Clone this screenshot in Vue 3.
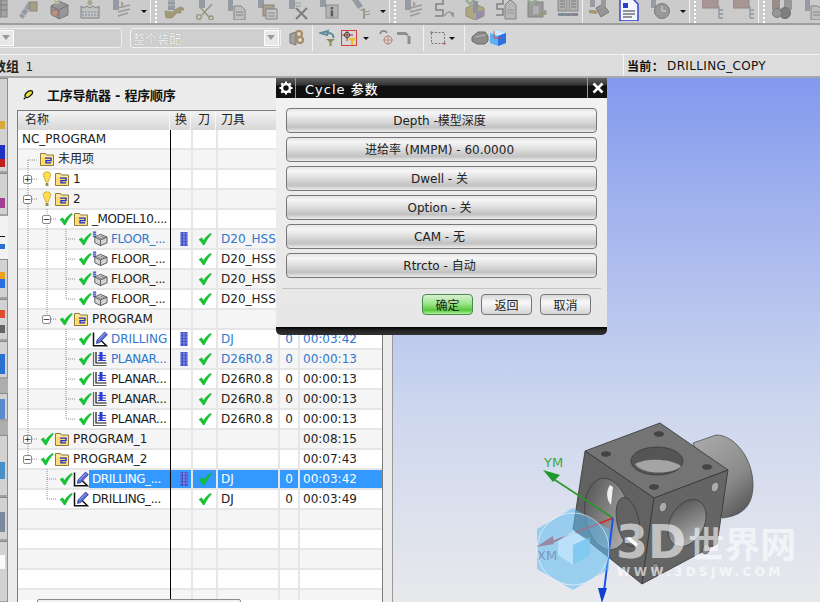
<template>
  <div class="app">
    <svg class="sprites" width="0" height="0">
      <defs>
        <symbol id="check" viewBox="0 0 14 14">
          <path d="M1 7.5 L3.6 5.8 L5.6 8.4 C7.4 5.4 9.6 3 12.8 1.2 L13.4 2.2 C10.6 5 8.4 8.4 6.4 12.8 L5 12.8 C3.8 10.6 2.6 9 1 7.5 Z" fill="#12c832" stroke="#0a9a25" stroke-width=".4" />
        </symbol>
        <symbol id="bulb" viewBox="0 0 14 16">
          <path d="M7 .8 C10 .8 11 2.6 10.6 4.6 C10.2 6.6 8.6 8.6 8.2 11 L5.8 11 C5.4 8.6 3.8 6.6 3.4 4.6 C3 2.6 4 .8 7 .8 Z" fill="#ffe04a" stroke="#b89a20" stroke-width=".7" />
          <rect x="5.6" y="12" width="2.8" height="3" fill="#9a8a50" />
        </symbol>
        <symbol id="folder" viewBox="0 0 16 16">
          <path d="M1.5 4 L1.5 2.5 L6.5 2.5 L7.5 4 L14.5 4 L14.5 14.5 L1.5 14.5 Z" fill="#ffe79a" stroke="#8d7a3c" />
          <path d="M2.5 6 L13.5 6 L13.5 13.5 L2.5 13.5 Z" fill="#ffda6a" />
          <path d="M6 7.2 H12 V9.6 H7 V11.8 H12" fill="none" stroke="#1a2fd8" stroke-width="1.3" />
        </symbol>
        <symbol id="floor" viewBox="0 0 17 16">
          <path d="M3 6 L9 3 L16 6 L16 12 L9 15 L3 12 Z" fill="#d4d4d4" stroke="#555" />
          <path d="M3 6 L9 9 L16 6 M9 9 V15" fill="none" stroke="#555" />
          <path d="M6 6 L11 8 M9 5 L14 7" stroke="#777" />
          <rect x="1" y="0" width="3.4" height="6" fill="#4a5cc8" />
          <path d="M1 2 H4.4 M1 4 H4.4" stroke="#b8c0f0" stroke-width=".8" />
        </symbol>
        <symbol id="drill" viewBox="0 0 16 16">
          <path d="M1.5 1.5 V14.8 H14.5 L8.5 9" fill="none" stroke="#111" stroke-width="1.5" />
          <path d="M4.4 12.4 L5 9 L12.6 1 L15.4 3.6 L7.8 11.6 Z" fill="#5a68d8" stroke="#27308c" stroke-width=".7" />
          <path d="M6.4 9 L13 2.4" stroke="#b8c0f4" stroke-width=".8" />
        </symbol>
        <symbol id="planar" viewBox="0 0 16 16">
          <path d="M1.5 1 V14.5 H14.5" fill="none" stroke="#666" stroke-width="1.2" />
          <path d="M4 1 V12 H14.5" fill="none" stroke="#111" stroke-width="1.2" />
          <path d="M6 4.5 H14 M6 7 H14 M6 9.5 H14" stroke="#2a3cd8" stroke-width="1.2" />
          <rect x="7.5" y="1" width="3" height="9" fill="#2a3cd8" />
        </symbol>
        <symbol id="lock" viewBox="0 0 8 14">
          <rect x=".5" y="0" width="7" height="14" fill="#4450c8" />
          <path d="M.5 2 H7.5 M.5 5 H7.5 M.5 8 H7.5 M.5 11 H7.5 M4 0 V14" stroke="#aab2ea" stroke-width=".8" stroke-dasharray="1.5 1" />
        </symbol>
        <symbol id="grid-doc" viewBox="0 0 22 22">
          <rect x="3" y="2" width="18" height="17" fill="#9a9a9a" stroke="#777" />
          <path d="M3 7 H21 M3 12 H21 M9 2 V19 M15 2 V19" stroke="#6c6c6c" />
        </symbol>
        <symbol id="solid" viewBox="0 0 22 22">
          <path d="M3 8 L11 3 L20 7 L20 17 L11 21 L3 16 Z" fill="#8a8a90" stroke="#666" />
          <path d="M3 8 L11 12 L20 7 M11 12 V21" fill="none" stroke="#5c5c5c" />
          <circle cx="7" cy="15" r="3.4" fill="#a98a7a" stroke="#a0564c" />
          <path d="M7 0 L9 4 L12 2 L11 6 L6 6 Z" fill="#b8b48a" />
        </symbol>
        <symbol id="drillgold" viewBox="0 0 22 22">
          <path d="M2 18 L12 3 L16 6 L6 21 Z" fill="#8a8e98" />
          <path d="M4 15 L9 18 M7 10 L12 13" stroke="#b4b8c0" />
          <rect x="13" y="4" width="7" height="9" fill="#a09672" stroke="#7e7660" />
        </symbol>
        <symbol id="wrench" viewBox="0 0 22 22">
          <rect x="5" y="0" width="7" height="12" fill="#8a8e98" />
          <path d="M5 3 H12 M5 7 H12" stroke="#b4b8c0" />
          <path d="M2 13 L9 14 L15 10 C17 8 21 9 21 12 L18 12 L18 15 L14 15 L9 20 L3 20 Z" fill="#9a8f62" stroke="#7e7660" stroke-width=".6" />
        </symbol>
        <symbol id="scissor" viewBox="0 0 22 22">
          <rect x="5" y="0" width="6" height="10" fill="#8a8e98" />
          <path d="M6 9 L15 19 M18 6 L8 17" stroke="#8e8a70" stroke-width="1.6" />
          <circle cx="5" cy="19" r="2.4" fill="none" stroke="#8e8a70" stroke-width="1.4" />
          <circle cx="17" cy="20" r="2" fill="none" stroke="#8e8a70" stroke-width="1.4" />
        </symbol>
        <symbol id="page" viewBox="0 0 22 22">
          <rect x="3" y="0" width="5" height="13" fill="#8a8e98" />
          <path d="M9 8 H16 L20 12 V22 H9 Z" fill="#bcbcbc" stroke="#727272" />
          <path d="M11 14 H18 M11 17 H18" stroke="#777" />
        </symbol>
        <symbol id="pages" viewBox="0 0 22 22">
          <rect x="2" y="0" width="6" height="10" fill="#8a8e98" />
          <rect x="7" y="7" width="11" height="11" fill="#a09880" stroke="#7a7260" />
          <path d="M10 11 H21 V21 H10 Z" fill="#c4c4c4" stroke="#727272" />
          <path d="M12 15 H19 M12 18 H19" stroke="#777" />
        </symbol>
        <symbol id="cross" viewBox="0 0 22 22">
          <rect x="2" y="0" width="6" height="11" fill="#8a8e98" />
          <path d="M8 5 H14 M8 8 H14" stroke="#8e8e8e" />
          <path d="M9 10 L20 21 M20 10 L9 21" stroke="#6c6c6c" stroke-width="2" />
        </symbol>
        <symbol id="info" viewBox="0 0 22 22">
          <rect x="2" y="0" width="6" height="9" fill="#8a8e98" />
          <rect x="8" y="7" width="12" height="13" fill="#b0b0b0" stroke="#7a7a7a" />
          <rect x="12.6" y="9" width="2.6" height="2.4" fill="#444" />
          <rect x="12.6" y="12.4" width="2.6" height="6" fill="#444" />
        </symbol>
        <symbol id="angled" viewBox="0 0 20 22">
          <path d="M2 2 L7 0 L13 8 L8 11 Z" fill="#8a8e98" />
          <path d="M9 12 L15 10 V21 H13 V13 Z" fill="#968f70" />
          <path d="M15 14 L20 13 M15 17 L20 16" stroke="#8a8a8a" />
        </symbol>
        <symbol id="mill" viewBox="0 0 22 22">
          <path d="M2 8 L5 10 L8 8 L11 10 L14 8 L17 10 L20 8 V20 H2 Z" fill="#c0c0c0" stroke="#6e6e6e" />
          <path d="M3 14 H19 M3 17 H19" stroke="#6c7c90" stroke-dasharray="2 1" />
          <path d="M11 0 L14 5 L11 8 L8 5 Z" fill="#a59f80" />
        </symbol>
        <symbol id="layers" viewBox="0 0 22 22">
          <rect x="3" y="0" width="6" height="12" fill="#8a8e98" />
          <path d="M8 10 L20 7 M8 14 L20 11 M8 18 L18 15" stroke="#8d8d8d" stroke-width="1.4" />
          <path d="M11 3 L14 6 L11 9" fill="#a09a78" />
        </symbol>
        <symbol id="curve" viewBox="0 0 22 22">
          <path d="M2 1 H10 V6 H3 V12 H10 V18 H2" fill="none" stroke="#727272" stroke-width="1.5" />
          <path d="M12 18 C13 13 18 13 20 17" fill="none" stroke="#8a8a8a" stroke-width="1.5" />
          <path d="M21 20 L17 16 L21 14 Z" fill="#8a8a8a" />
        </symbol>
        <symbol id="checktool" viewBox="0 0 22 22">
          <path d="M2 10 L11 6 L20 10 V18 L11 22 L2 18 Z" fill="#a8a070" stroke="#86805e" />
          <rect x="9" y="3" width="5" height="12" fill="#7c8898" />
          <path d="M2 2 L6 6 L13 -1" fill="none" stroke="#8aa088" stroke-width="2.4" />
          <path d="M12 14 L20 12 V18 L12 22 Z" fill="#8a7ea0" />
        </symbol>
        <symbol id="curvedoc" viewBox="0 0 22 22">
          <path d="M1 1 H8 V6 H2 V11 H8 V17 H1" fill="none" stroke="#727272" stroke-width="1.5" />
          <path d="M10 7 L15 2 L16 2 L21 7 V21 H10 Z" fill="#b2b2b2" stroke="#727272" />
          <path d="M12 12 H19 M12 15 H19" stroke="#888" />
        </symbol>
        <symbol id="checkbox" viewBox="0 0 22 22">
          <rect x="2" y="4" width="15" height="15" fill="#8f8f8f" stroke="#707070" />
          <path d="M2 2 L6 6 L13 -1" fill="none" stroke="#8aa088" stroke-width="2.4" />
          <path d="M12 14 L20 12 L21 16 L13 19 Z" fill="#8d8a70" />
          <rect x="7" y="8" width="6" height="8" fill="#aaa" />
        </symbol>
        <symbol id="book" viewBox="0 0 22 22">
          <rect x="1" y="0" width="9" height="13" fill="#a8a8a8" stroke="#7a7a7a" />
          <rect x="12" y="0" width="9" height="13" fill="#a8a8a8" stroke="#7a7a7a" />
          <path d="M3 3 H8 M3 6 H8 M3 9 H8 M14 3 H19 M14 6 H19 M14 9 H19" stroke="#6c6c6c" />
          <rect x="1" y="15" width="20" height="3" fill="#7a6f8e" />
          <path d="M3 15 V18 M8 15 V18 M14 15 V18" stroke="#5e9080" stroke-width="2" />
        </symbol>
        <symbol id="machine" viewBox="0 0 22 22">
          <rect x="3" y="0" width="5" height="9" fill="#8a8e98" />
          <path d="M2 12 H8 L11 14 L9 16 L2 15 Z" fill="#a58a5a" />
          <path d="M9 10 L16 6 L22 14 L14 19 Z" fill="#8a8a8a" stroke="#666" />
          <rect x="14" y="0" width="5" height="8" fill="#8c8c92" />
        </symbol>
        <symbol id="clock" viewBox="0 0 22 22">
          <rect x="2" y="0" width="5" height="10" fill="#8a8e98" />
          <circle cx="13" cy="13" r="7.5" fill="#8c8c8c" stroke="#666" />
          <path d="M13 8 V13 H17" fill="none" stroke="#ddd" />
        </symbol>
        <symbol id="report" viewBox="0 0 22 22">
          <path d="M2 0 H15 L20 5 V22 H2 Z" fill="#f4f6ff" stroke="#2a3cc8" stroke-width="1.4" />
          <path d="M5 4 H10 V9 H5 Z" fill="#2a3cc8" />
          <path d="M5 12 H17 M5 15 H17 M5 18 H14" stroke="#333" />
        </symbol>
        <symbol id="tree" viewBox="0 0 22 22">
          <rect x="0" y="0" width="16" height="10" fill="#a08a86" stroke="#8a7672" />
          <path d="M17 8 V20 M17 12 H21 M17 16 H21 M17 20 H21" stroke="#7c8a98" stroke-width="1.3" />
        </symbol>
        <symbol id="binocular" viewBox="0 0 22 22">
          <rect x="1" y="0" width="8" height="12" fill="#8c7c78" />
          <rect x="13" y="0" width="8" height="12" fill="#8c8c8c" />
          <circle cx="14" cy="15" r="5.5" fill="#6c6c6c" stroke="#555" />
          <circle cx="6" cy="15" r="4.5" fill="#8a8a8a" stroke="#666" />
        </symbol>
        <symbol id="gear" viewBox="0 0 14 14">
          <circle cx="7" cy="7" r="4" fill="none" stroke="#fff" stroke-width="2.6" />
          <path d="M7 .4 V3 M7 11 V13.6 M.4 7 H3 M11 7 H13.6 M2.3 2.3 L4 4 M10 10 L11.7 11.7 M11.7 2.3 L10 4 M4 10 L2.3 11.7" stroke="#fff" stroke-width="2" />
        </symbol>
      </defs>
    </svg>

    <div class="toolbar top-bar">
      <template v-for="(group, g) in topGroups" :key="g">
        <div class="tool-group">
          <span v-if="group.grip" class="grip"></span>
          <svg v-for="(ic, i) in group.icons" :key="i" class="tb-icon" :class="{ lit: ic === 'report' }" width="22" height="22">
            <use :href="'#' + ic" />
          </svg>
          <span v-if="group.more" class="drop"></span>
        </div>
        <span class="tb-sep"></span>
      </template>
    </div>

    <div class="toolbar second-bar">
      <div class="combo first"><span class="combo-arrow"></span></div>
      <div class="combo second"><span class="combo-text">整个装配</span><span class="combo-arrow"></span></div>
      <svg class="small-icon" width="18" height="18" viewBox="0 0 18 18">
        <path d="M2 5 L8 3 V16 L2 14 Z" fill="#a0a0a0" stroke="#777" />
        <circle cx="11" cy="5" r="3" fill="none" stroke="#a58a60" stroke-width="2" />
        <circle cx="12" cy="11" r="3" fill="none" stroke="#a58a60" stroke-width="2" />
      </svg>
      <span class="tb-sep tall"></span>
      <svg class="small-icon" width="18" height="18" viewBox="0 0 18 18">
        <path d="M2 4 L9 2 L8 6 Z M9 4 C14 4 15 7 14 9" fill="none" stroke="#5b8c96" stroke-width="2" />
        <path d="M7 10 H16 L12.5 13 V17 H10.5 V13 Z" fill="#8f8a60" />
      </svg>
      <div class="target-box">
        <svg width="16" height="16" viewBox="0 0 16 16">
          <path d="M0 5 H12 M6 0 V11" stroke="#a03030" />
          <circle cx="6" cy="5" r="2.6" fill="none" stroke="#444" />
          <path d="M7 8 H15 L12 11 V15 H10 V11 Z" fill="#e8c220" />
        </svg>
      </div>
      <span class="drop"></span>
      <svg class="small-icon spaced" width="18" height="18" viewBox="0 0 18 18">
        <path d="M2 5 C3 1 8 1 9 4" fill="none" stroke="#8a8a8a" stroke-width="1.6" />
        <circle cx="10" cy="11" r="4" fill="none" stroke="#c08a80" />
        <path d="M5 11 H15 M10 6 V16" stroke="#c08a80" />
      </svg>
      <svg class="small-icon" width="18" height="18" viewBox="0 0 18 18">
        <path d="M1 3 H10 L13 6 L11 7 L9 6 H1 Z" fill="#8e8e8e" />
        <path d="M13 7 V15" stroke="#8e8e8e" stroke-width="3" />
      </svg>
      <span class="tb-sep tall marquee-sep"></span>
      <svg class="small-icon" width="16" height="16" viewBox="0 0 16 16">
        <rect x="1.5" y="2.5" width="13" height="11" fill="none" stroke="#777" stroke-dasharray="2 1.5" />
        <circle cx="1.5" cy="2.5" r="1.2" fill="#b06a60" />
        <circle cx="14.5" cy="13.5" r="1.2" fill="#b06a60" />
      </svg>
      <span class="drop"></span>
      <span class="tb-sep tall"></span>
      <svg class="small-icon" width="18" height="18" viewBox="0 0 18 18">
        <path d="M1 8 L7 3 H14 L17 7 V12 L14 15 H6 L1 12 Z" fill="#8c8c8c" stroke="#6a6a6a" />
        <path d="M4 8 L14 6" stroke="#b8b8b8" />
      </svg>
      <svg class="small-icon" width="18" height="18" viewBox="0 0 18 18">
        <path d="M1 4 L9 1 L17 4 V14 L9 17 L1 14 Z" fill="#5bb0f2" />
        <path d="M1 4 L9 7 L17 4 L9 1 Z" fill="#cfe8fb" />
        <path d="M9 7 L17 4 V14 L9 17 Z" fill="#2f6fe0" />
        <path d="M5 2.5 V9 H13" fill="none" stroke="#d04a4a" />
      </svg>
    </div>

    <div class="status-bar">
      <span class="status-left">数组 <b>1</b></span>
      <span class="status-right"><b>当前：</b> DRILLING_COPY</span>
    </div>

    <div class="main">
      <div class="dock">
        <div v-for="(seg, i) in dockSegs" :key="i" class="dock-seg" :class="seg.cls" :style="{ height: seg.h + 'px' }">
          <i
            v-for="(m, j) in seg.marks"
            :key="j"
            class="dock-mark"
            :style="{ top: m[0] + 'px', height: m[1] + 'px', background: m[2] }"
          ></i>
        </div>
      </div>

      <div class="nav">
        <div class="nav-title">
          <svg width="11" height="11" viewBox="0 0 14 14">
            <path d="M3 10 C1 7 6 2 10 2 C13 2 13 6 10 8 C8 10 5 12 3 10 Z" fill="#e8e04a" stroke="#111" stroke-width="1.6" />
            <path d="M3 11 L1 13" stroke="#111" stroke-width="1.6" />
          </svg>
          <span>工序导航器 - 程序顺序</span>
        </div>

        <div class="table">
          <div class="head row-grid">
            <span>名称</span>
            <span>换</span>
            <span>刀</span>
            <span>刀具</span>
            <span></span>
            <span></span>
          </div>
          <div class="rows">
            <div
              v-for="(row, i) in rows"
              :key="i"
              class="row row-grid"
              :class="{ odd: i % 2 === 1, selected: row.selected, linked: row.blue }"
            >
              <div class="name-cell" :style="{ paddingLeft: (row.pad ?? 5 + row.level * 19) + 'px' }">
                <span v-if="row.plain" class="plain-name">{{ row.name }}</span>
                <template v-else-if="row.icon">
                  <span class="expander" :class="{ hidden: !row.exp }">{{ row.exp === "plus" ? "+" : "−" }}</span>
                  <svg v-if="row.state" class="state" width="14" height="16"><use :href="'#' + row.state" /></svg>
                  <span v-else-if="!row.unused" class="state"></span>
                  <svg class="node-icon" width="16" height="16"><use :href="'#' + row.icon" /></svg>
                  <span class="node-text" :class="{ cut: row.name.endsWith('...') }">{{ row.name }}</span>
                </template>
              </div>
              <div class="cell lock-cell">
                <svg v-if="row.lock" width="8" height="14"><use href="#lock" /></svg>
              </div>
              <div class="cell center">
                <svg v-if="row.ok" width="14" height="14"><use href="#check" /></svg>
              </div>
              <div class="cell">{{ row.tool }}</div>
              <div class="cell center">{{ row.n }}</div>
              <div class="cell">{{ row.time }}</div>
            </div>
          </div>
          <svg class="tree-lines" width="153" height="470" viewBox="18 129 153 470">
            <path
              d="M28 159 V458 M28 159 H38 M32 178 H38 M32 198 H38 M32 438 H38 M32 458 H38
                 M47 208 V318 M51 218 H57 M51 318 H57
                 M66 228 V298 M66 238 H76 M66 258 H76 M66 278 H76 M66 298 H76
                 M66 328 V418 M66 338 H76 M66 358 H76 M66 378 H76 M66 398 H76 M66 418 H76
                 M47 468 V498 M47 478 H57 M47 498 H57"
              fill="none"
              stroke="#8e8e8e"
              stroke-dasharray="1 1"
            />
          </svg>
          <span class="column-line"></span>
          <div class="h-scroll"></div>
        </div>
        <div class="gutter"></div>
      </div>

      <div class="viewport">
        <svg class="scene" width="427" height="525" viewBox="393 77 427 525">
          <defs>
            <linearGradient id="cyl" x1="0.2" y1="0" x2="0.8" y2="1">
              <stop offset="0" stop-color="#a8a8a8" />
              <stop offset=".6" stop-color="#8a8a8a" />
              <stop offset="1" stop-color="#565656" />
            </linearGradient>
            <linearGradient id="hole" x1="0" y1="0" x2="1" y2="1">
              <stop offset="0" stop-color="#4c4c4c" />
              <stop offset="1" stop-color="#bcbcbc" />
            </linearGradient>
          </defs>
          <path d="M693 442 L716 434 C735 434 753 458 753 484 C753 505 742 515 722 517 Z" fill="url(#cyl)" stroke="#444" stroke-width=".7" />
          <path d="M585 450 L660 422 L728 469 L654 497 Z" fill="#747474" stroke="#333" stroke-width=".8" />
          <path d="M585 450 L654 497 L642 583 L573 528 Z" fill="#626262" stroke="#333" stroke-width=".8" />
          <path d="M654 497 L728 469 L717 543 L642 583 Z" fill="#656565" stroke="#333" stroke-width=".8" />
          <ellipse cx="657" cy="460" rx="26" ry="14" fill="#555" stroke="#333" stroke-width=".7" />
          <path d="M635 463 C645 457 670 457 681 465 C676 473 642 475 635 463 Z" fill="#a4a4a4" />
          <ellipse cx="659" cy="433" rx="5.5" ry="3.2" fill="#444" stroke="#888" stroke-width=".5" />
          <ellipse cx="606" cy="453" rx="5.5" ry="3.2" fill="#444" stroke="#888" stroke-width=".5" />
          <ellipse cx="707" cy="466" rx="5.5" ry="3.2" fill="#444" stroke="#888" stroke-width=".5" />
          <ellipse cx="654" cy="486" rx="5.5" ry="3.2" fill="#444" stroke="#888" stroke-width=".5" />
          <ellipse cx="607" cy="513" rx="22" ry="36" transform="rotate(-8 607 513)" fill="url(#hole)" stroke="#333" stroke-width=".6" />
          <ellipse cx="628" cy="521" rx="11" ry="25" transform="rotate(-12 628 521)" fill="#626262" stroke="#333" stroke-width=".6" />
          <path d="M610 484 C606 490 606 498 611 504 L613 486 Z" fill="#f0f0f2" />
          <path d="M626 537 L636 546 L638 543 L630 536 Z" fill="#f4f4f4" />
          <ellipse cx="687" cy="522" rx="17" ry="25" transform="rotate(28 687 522)" fill="url(#hole)" stroke="#333" stroke-width=".6" />
          <ellipse cx="663" cy="506" rx="3.6" ry="5" transform="rotate(20 663 506)" fill="#aaa" stroke="#333" stroke-width=".5" />
          <ellipse cx="715" cy="486" rx="3.6" ry="5" transform="rotate(20 715 486)" fill="#aaa" stroke="#333" stroke-width=".5" />
          <ellipse cx="706" cy="548" rx="3.6" ry="5" transform="rotate(20 706 548)" fill="#888" stroke="#333" stroke-width=".5" />
          <ellipse cx="655" cy="567" rx="3.6" ry="5" transform="rotate(20 655 567)" fill="#888" stroke="#333" stroke-width=".5" />

          <path d="M613 517 L552 477" stroke="#2a962a" stroke-width="1.6" />
          <path d="M543 469 L560 474 L553 481 Z" fill="#1f9a2a" />
          <path d="M613 517 L552 541" stroke="#e02020" stroke-width="1.6" />
          <path d="M536 546 L553 535 L554 543 Z" fill="#e04a4a" />
          <path d="M613 517 L604 590" stroke="#1a55e8" stroke-width="2" />
          <path d="M602 602 L598 587 L607 587 Z" fill="#1040d0" />
          <text x="544" y="466" class="axis green">YM</text>
          <text x="537" y="559" class="axis red">XM</text>

          <g class="mark">
            <path d="M573 507 L609 528 L609 568 L573 589 L537 568 L537 528 Z" fill="#5fbcf0" fill-opacity=".55" />
            <path d="M573 530 L590 540 L590 554 L573 564 L558 554 L558 540 Z" fill="#bfe4fa" fill-opacity=".85" />
            <path d="M573 544 L590 536 L590 554 L573 564 Z" fill="#6cc0f0" fill-opacity=".7" />
            <circle cx="573" cy="548" r="36" fill="none" stroke="#fff" stroke-opacity=".55" />
            <text x="616" y="557" class="mark-big"><tspan class="mark-3d">3D</tspan><tspan dx="2">世界网</tspan></text>
            <text x="617" y="575" class="mark-small">WWW.3DSJW.COM</text>
          </g>
        </svg>
      </div>
    </div>

    <div class="dialog">
      <div class="dialog-title">
        <span class="gear-cell"><svg width="14" height="14"><use href="#gear" /></svg></span>
        <span class="title-text">Cycle 参数</span>
        <span class="close-cell">
          <svg width="12" height="12" viewBox="0 0 12 12"><path d="M1.5 1.5 L10.5 10.5 M10.5 1.5 L1.5 10.5" stroke="#fff" stroke-width="2.6" /></svg>
        </span>
      </div>
      <div class="dialog-body">
        <button v-for="b in paramButtons" :key="b" class="param-btn">{{ b }}</button>
        <div class="dialog-sep"></div>
        <div class="dialog-actions">
          <button class="act-btn primary">确定</button>
          <button class="act-btn">返回</button>
          <button class="act-btn">取消</button>
        </div>
      </div>
      <div class="dialog-foot"></div>
    </div>
  </div>
</template>

<script setup>
const topGroups = [
  { icons: ["grid-doc", "drillgold", "solid", "mill", "layers"], more: true },
  { grip: true, icons: ["wrench", "scissor", "page", "pages", "cross", "info", "angled"], more: true },
  { grip: true, icons: ["layers", "curve", "checktool", "curvedoc", "checkbox", "book"] },
  { icons: ["machine", "report", "clock"], more: true },
  { grip: true, icons: ["tree", "tree"] },
  { grip: true, icons: ["binocular", "page"] },
];

const dockSegs = [
  { h: 95, cls: "tab", marks: [[42, 8, "#d8a838"], [66, 14, "#2030c0"], [80, 8, "#c02020"]] },
  { h: 43, cls: "tab", marks: [[24, 10, "#a04090"]] },
  { h: 43, cls: "plain", marks: [[20, 1, "#111"], [28, 5, "#2a70d0"]] },
  { h: 40, cls: "tab", marks: [[12, 7, "#f0a020"], [19, 9, "#2a70e0"]] },
  { h: 42, cls: "tab", marks: [[10, 8, "#e05030"], [25, 8, "#666"]] },
  { h: 38, cls: "tab", marks: [[12, 20, "#2a70d0"]] },
  { h: 14, cls: "band" },
  { h: 28, cls: "tab", marks: [[5, 20, "#5a8ad0"]] },
  { h: 14, cls: "band" },
  { h: 62, cls: "tab", marks: [[26, 17, "#4a90c8"]] },
  { h: 44, cls: "tab", marks: [[14, 20, "#7a8a9c"]] },
  { h: 62, cls: "tab", marks: [[13, 14, "#fafafa"]] },
];

const floor = () => ({
  name: "FLOOR_...", level: 2, state: "check", icon: "floor", ok: true, tool: "D20_HSS", n: "0", time: "00:00:42",
});
const planar = blue => ({
  name: "PLANAR...", level: 2, state: "check", icon: "planar", ok: true, tool: "D26R0.8", n: "0", time: "00:00:13", blue, lock: blue,
});

const rows = [
  { name: "NC_PROGRAM", plain: true, level: 0 },
  { name: "未用项", pad: 4, level: 0, icon: "folder", unused: true },
  { name: "1", level: 0, exp: "plus", state: "bulb", icon: "folder" },
  { name: "2", level: 0, exp: "minus", state: "bulb", icon: "folder" },
  { name: "_MODEL10....", level: 1, exp: "minus", state: "check", icon: "folder" },
  { ...floor(), blue: true, lock: true },
  floor(),
  floor(),
  floor(),
  { name: "PROGRAM", level: 1, exp: "minus", state: "check", icon: "folder" },
  { name: "DRILLING", level: 2, state: "check", icon: "drill", ok: true, tool: "DJ", n: "0", time: "00:03:42", blue: true, lock: true },
  planar(true),
  planar(false),
  planar(false),
  planar(false),
  { name: "PROGRAM_1", level: 0, exp: "plus", state: "check", icon: "folder", time: "00:08:15" },
  { name: "PROGRAM_2", level: 0, exp: "minus", state: "check", icon: "folder", time: "00:07:43" },
  { name: "DRILLING_...", level: 1, state: "check", icon: "drill", ok: true, tool: "DJ", n: "0", time: "00:03:42", lock: true, selected: true },
  { name: "DRILLING_...", level: 1, state: "check", icon: "drill", ok: true, tool: "DJ", n: "0", time: "00:03:49" },
  { level: 0 }, { level: 0 }, { level: 0 }, { level: 0 }, { level: 0 },
];

const paramButtons = [
  "Depth -模型深度",
  "进给率 (MMPM) - 60.0000",
  "Dwell - 关",
  "Option - 关",
  "CAM - 无",
  "Rtrcto - 自动",
];
</script>

<style>
html,
body {
  margin: 0;
  overflow: hidden;
}
</style>

<style scoped>
.app {
  position: relative;
  width: 820px;
  height: 602px;
  overflow: hidden;
  background: #e4e4e4;
  font-family: "DejaVu Sans", "Noto Sans CJK SC", sans-serif;
  font-size: 12px;
  color: #222;
}

.sprites {
  position: absolute;
}

.toolbar {
  display: flex;
  align-items: center;
  box-sizing: border-box;
}

.top-bar {
  height: 25px;
  overflow: hidden;
  background: #cbcbcb;
  border-bottom: 2px solid #9e9e9e;
  margin-left: -18px;
}

.tool-group {
  display: flex;
  align-items: center;
  gap: 9px;
  height: 100%;
  padding: 0 3px 0 4px;
  flex: none;
}

.tb-icon {
  flex: none;
  margin-top: -6px;
  opacity: 0.8;
}

.tb-icon.lit {
  margin-top: -4px;
  opacity: 1;
}

.grip {
  width: 2px;
  height: 22px;
  margin-right: -3px;
  background: repeating-linear-gradient(#fff 0 2px, transparent 2px 4px);
}

.drop {
  width: 0;
  height: 0;
  flex: none;
  border-left: 3px solid transparent;
  border-right: 3px solid transparent;
  border-top: 3px solid #111;
}

.tb-sep {
  flex: none;
  width: 1px;
  height: 100%;
  background: #f2f2f2;
}

.second-bar {
  height: 30px;
  padding-bottom: 3px;
  background: #d6d6d6;
  border-bottom: 1px solid #f2f2f2;
  box-shadow: 0 1px 0 #b4b4b4;
}

.combo {
  box-sizing: border-box;
  height: 20px;
  display: flex;
  justify-content: space-between;
  align-items: center;
  border: 1px solid #f0f0f0;
  border-radius: 3px;
  background: #cfcfcf;
}

.combo.first {
  width: 124px;
  margin-left: -2px;
  margin-right: 8px;
}

.combo.second {
  width: 151px;
  margin-right: 7px;
}

.combo-text {
  padding-left: 2px;
  color: #f4f4f4;
  text-shadow: 0 0 1px #8a8a8a;
  font-size: 12px;
}

.combo-arrow {
  position: relative;
  width: 15px;
  height: 16px;
  margin-right: 1px;
  background: #e8e8e8;
  border: 1px solid #fff;
  box-sizing: border-box;
}

.combo-arrow::after {
  content: "";
  position: absolute;
  left: 2px;
  top: 4px;
  border-left: 4px solid transparent;
  border-right: 4px solid transparent;
  border-top: 5px solid #9a9a9a;
}

.small-icon {
  flex: none;
}

.small-icon.spaced {
  margin-left: 6px;
}

.tb-sep.tall {
  height: 26px;
  margin: 0 6px;
}

.tb-sep.marquee-sep {
  margin-left: 9px;
}

.target-box {
  box-sizing: border-box;
  width: 16px;
  height: 16px;
  margin: 0 3px 0 4px;
  border: 1px solid #d84040;
  overflow: hidden;
}

.target-box svg {
  display: block;
  margin: -1px;
}

.second-bar .drop {
  margin: 0 3px;
}

.status-bar {
  height: 21px;
  display: flex;
  justify-content: space-between;
  align-items: center;
  background: #dcdcdc;
  border-bottom: 2px solid #a8a8a8;
  overflow: hidden;
}

.status-left {
  margin-left: -7px;
  font-size: 13px;
  font-weight: 600;
}

.status-left b {
  margin-left: 2px;
  font-size: 12px;
  font-weight: 400;
}

.status-right {
  box-sizing: border-box;
  width: 197px;
  height: 100%;
  padding-left: 3px;
  display: flex;
  align-items: center;
  gap: 3px;
  border-left: 1px solid #f6f6f6;
  color: #111;
  letter-spacing: 0.35px;
}

.main {
  display: flex;
  height: 524px;
}

.dock {
  width: 8px;
  flex: none;
  overflow: hidden;
}

.dock-seg {
  position: relative;
  box-sizing: border-box;
  overflow: hidden;
}

.dock-seg.tab {
  background: #d2d2d2;
  border-top: 1px solid #8a8a8a;
  border-bottom: 2px solid #a2a2a2;
  border-right: 1px solid #8e8e8e;
}

.dock-seg.plain {
  background: #f2f2f2;
}

.dock-seg.band {
  background: #adadad;
}

.dock-mark {
  position: absolute;
  left: 0;
  width: 5px;
}

.nav {
  position: relative;
  width: 385px;
  flex: none;
  background: #ececec;
}

.nav-title {
  height: 32px;
  display: flex;
  align-items: center;
  gap: 13px;
  padding-left: 15px;
  font-size: 13px;
  font-weight: 600;
  letter-spacing: -0.25px;
  background: #ececec;
  color: #111;
}

.table {
  position: relative;
  box-sizing: border-box;
  width: 366px;
  height: 493px;
  margin-left: 9px;
  border-top: 1px solid #7c7c7c;
  border-left: 1px solid #7c7c7c;
  border-right: 1px solid #7c7c7c;
  background: #fff;
}

.row-grid {
  display: grid;
  grid-template-columns: 152px 21px 25px 62px 20px 84px;
}

.head {
  height: 19px;
  background: linear-gradient(#f2f2f2, #d8d8d8);
  font-size: 12px;
  line-height: 18px;
  color: #222;
}

.head span {
  box-sizing: border-box;
  padding-left: 5px;
  border-right: 1px solid #f8f8f8;
  overflow: hidden;
  white-space: nowrap;
}

.head span:first-child {
  padding-left: 7px;
}

.head span:nth-child(3) {
  padding-left: 7px;
}

.rows {
  height: 470px;
  overflow: hidden;
}

.row {
  height: 20px;
  background: #fff;
}

.row.odd {
  background: #f5f5f5;
}

.row.linked {
  color: #2f77cf;
}

.name-cell {
  box-sizing: border-box;
  display: flex;
  align-items: center;
  height: 20px;
  border-bottom: 2px solid #e6e6e6;
  overflow: hidden;
  white-space: nowrap;
}

.plain-name {
  margin-left: -1px;
}

.expander {
  box-sizing: border-box;
  width: 9px;
  height: 9px;
  margin-right: 8px;
  flex: none;
  display: flex;
  align-items: center;
  justify-content: center;
  background: #fff;
  border: 1px solid #8a8a8a;
  border-radius: 2px;
  font-size: 9px;
  line-height: 1;
  color: #111;
  position: relative;
  z-index: 1;
}

.expander.hidden {
  visibility: hidden;
}

.state {
  width: 14px;
  flex: none;
}

.node-icon {
  flex: none;
}

.node-text {
  flex: 1;
  height: 18px;
  line-height: 18px;
  padding-left: 3px;
}

.node-text.cut {
  letter-spacing: -0.4px;
}

.cell {
  box-sizing: border-box;
  display: flex;
  align-items: center;
  height: 20px;
  padding-left: 3px;
  border-left: 2px solid #e6e6e6;
  border-bottom: 2px solid #e6e6e6;
  white-space: nowrap;
  overflow: hidden;
}

.cell.center {
  justify-content: center;
  padding-left: 0;
}

.cell.lock-cell {
  padding-left: 10px;
  border-left: 0;
}

.row.selected .cell {
  background: #3399ff;
  color: #fff;
}

.row.selected .node-text {
  background: #3399ff;
  color: #fff;
}

.tree-lines {
  position: absolute;
  left: 0;
  top: 19px;
  pointer-events: none;
}

.column-line {
  position: absolute;
  left: 152px;
  top: 19px;
  width: 1px;
  height: 470px;
  background: #000;
}

.h-scroll {
  position: absolute;
  left: 19px;
  bottom: -4px;
  width: 202px;
  height: 6px;
  background: #f0f0f0;
  border: 1px solid #8a8a8a;
  border-radius: 2px;
}

.gutter {
  position: absolute;
  right: 0;
  top: 0;
  bottom: 0;
  width: 1px;
  background: #9a9a9a;
}

.viewport {
  flex: 1;
  background: linear-gradient(#8299ee 0%, #a8b8ee 30%, #ccd6ee 62%, #e8e9ec 100%);
}

.scene {
  display: block;
}

.axis {
  font-size: 13px;
  font-family: "DejaVu Sans", sans-serif;
}

.axis.green {
  fill: #3aa83a;
}

.axis.red {
  fill: #a06a80;
}

.mark-big {
  font-family: "DejaVu Sans", "Noto Sans CJK SC", sans-serif;
  font-size: 36px;
  font-weight: 700;
  fill: #fff;
  fill-opacity: 0.6;
}

.mark-3d {
  font-size: 46px;
}

.mark-small {
  font-family: "DejaVu Sans", sans-serif;
  font-size: 12px;
  font-weight: 700;
  letter-spacing: 3.4px;
  fill: #fff;
  fill-opacity: 0.65;
}

.dialog {
  position: absolute;
  left: 276px;
  top: 78px;
  width: 331px;
  height: 257px;
  display: flex;
  flex-direction: column;
  background: #ececec;
  border-radius: 0 0 5px 5px;
  overflow: hidden;
}

.dialog-title {
  height: 20px;
  flex: none;
  display: flex;
  align-items: center;
  background: linear-gradient(#5e5e5e 0%, #333 35%, #101010 40%, #111 100%);
  color: #fff;
}

.gear-cell,
.close-cell {
  box-sizing: border-box;
  width: 20px;
  height: 100%;
  flex: none;
  display: flex;
  align-items: center;
  justify-content: center;
}

.gear-cell {
  border-right: 1px solid #999;
}

.close-cell {
  border-left: 1px solid #999;
}

.title-text {
  flex: 1;
  padding-left: 9px;
  font-size: 13px;
  letter-spacing: 1px;
  font-weight: 500;
}

.dialog-body {
  flex: 1;
  display: flex;
  flex-direction: column;
  gap: 4px;
  padding: 10px 10px 0;
  background: linear-gradient(#f2f2f2, #e6e6e6);
}

.param-btn {
  height: 25px;
  flex: none;
  padding: 0 4px 2px 0;
  border: 1px solid #777;
  border-radius: 4px;
  background: linear-gradient(#e6e6e6 0%, #f6f6f6 18%, #d8d8d8 55%, #c2c2c2 80%, #ececec 100%);
  font-family: inherit;
  font-size: 12px;
  color: #222;
}

.dialog-sep {
  height: 1px;
  margin: 6px -4px 0;
  background: #c4c4c4;
}

.dialog-actions {
  display: flex;
  justify-content: flex-end;
  gap: 8px;
  padding: 1px 6px 0 0;
}

.act-btn {
  width: 51px;
  height: 21px;
  padding: 0;
  border: 1px solid #777;
  border-radius: 4px;
  background: linear-gradient(#d8d8d8, #f8f8f8 40%, #d4d4d4);
  font-family: inherit;
  font-size: 12px;
  color: #222;
}

.act-btn.primary {
  border-color: #4a8a4a;
  background: linear-gradient(#d8f0d0, #9ee58c 45%, #58c83e 80%, #b0f0a0);
}

.dialog-foot {
  height: 8px;
  flex: none;
  background: linear-gradient(#000 0%, #222 40%, #333 100%);
}
</style>
